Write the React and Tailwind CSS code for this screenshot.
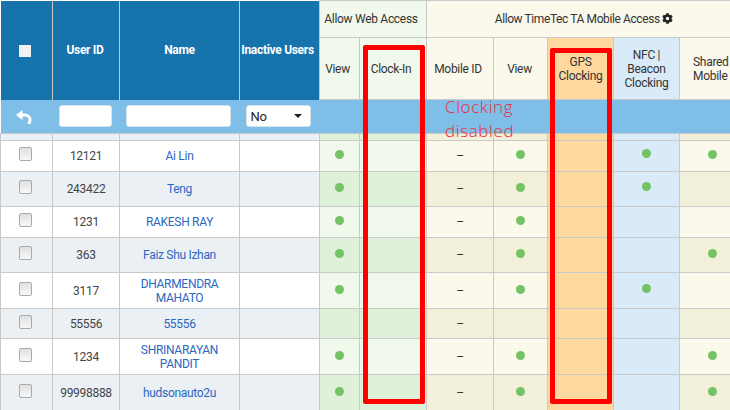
import { FaCog } from "react-icons/fa";

const users = [
  { id: "12121", name: "Ai Lin", h: "h-[31px]", view: 1, mobileView: 1, nfc: 1, shared: 1 },
  { id: "243422", name: "Teng", h: "h-[35px]", view: 1, mobileView: 1, nfc: 1, shared: 0 },
  { id: "1231", name: "RAKESH RAY", h: "h-[31px]", view: 1, mobileView: 1, nfc: 0, shared: 0 },
  { id: "363", name: "Faiz Shu Izhan", h: "h-[35px]", view: 1, mobileView: 1, nfc: 0, shared: 1 },
  { id: "3117", name: "DHARMENDRA MAHATO", h: "h-[36px]", view: 1, mobileView: 1, nfc: 1, shared: 0 },
  { id: "55556", name: "55556", h: "h-[30px]", view: 0, mobileView: 0, nfc: 0, shared: 0 },
  { id: "1234", name: "SHRINARAYAN PANDIT", h: "h-[36px]", view: 1, mobileView: 1, nfc: 0, shared: 1 },
  { id: "99998888", name: "hudsonauto2u", h: "h-[36px]", view: 1, mobileView: 1, nfc: 0, shared: 1 },
];

const Dot = ({ up }) => (
  <span className={`inline-block w-[9px] h-[9px] rounded-full bg-[#74c365] align-middle ${up ? "-translate-y-[3px]" : "-translate-y-[2px]"}`} />
);

const cell = "border border-[#c9c9c9] text-center p-0";
const head = "border border-[#c9c9c9] text-center p-0 text-[12px] leading-[14px] text-[#333] font-normal";
const blueHead = "border-r border-[#c9c9c9] text-center p-0 bg-[#1673ac] text-white font-bold text-[12px]";

function Row({ user, alt }) {
  const green = alt ? "bg-[#dff1d8]" : "bg-[#f1f8ec]";
  const cream = alt ? "bg-[#f3f0da]" : "bg-[#fbf8ec]";
  return (
    <tr className={`${user.h} ${alt ? "bg-[#ebf0f5]" : "bg-white"} text-[12px] leading-[14px]`}>
      <td className={cell}>
        <span className="inline-block w-[13px] h-[14px] rounded-[2px] border border-[#aaa] bg-gradient-to-b from-[#e0e0e0] to-[#f8f8f8] align-middle -translate-x-px -translate-y-[2px]" />
      </td>
      <td className={`${cell} text-[#444]`}>{user.id}</td>
      <td className={`${cell} text-[#2a68c0] px-4`}>{user.name}</td>
      <td className={cell} />
      <td className={`${cell} ${green}`}>{user.view ? <Dot /> : null}</td>
      <td className={`${cell} ${green}`} />
      <td className={`${cell} ${cream} text-[#333]`}>–</td>
      <td className={`${cell} ${cream}`}>{user.mobileView ? <Dot /> : null}</td>
      <td className={`${cell} bg-[#fed89f]`} />
      <td className={`${cell} bg-[#d9eaf8]`}>{user.nfc ? <Dot up /> : null}</td>
      <td className={`${cell} ${cream}`}>{user.shared ? <Dot /> : null}</td>
    </tr>
  );
}

export default function App() {
  return (
    <div className="relative w-[730px] h-[410px] overflow-hidden bg-white font-['Roboto',sans-serif] tracking-[-0.3px]">
      <table className="table-fixed border-collapse w-[745px]">
        <colgroup>
          <col className="w-[52px]" />
          <col className="w-[67px]" />
          <col className="w-[120px]" />
          <col className="w-[80px]" />
          <col className="w-[40px]" />
          <col className="w-[67px]" />
          <col className="w-[67px]" />
          <col className="w-[54px]" />
          <col className="w-[66px]" />
          <col className="w-[66px]" />
          <col className="w-[66px]" />
        </colgroup>
        <thead>
          <tr className="h-[37px]">
            <th rowSpan={2} className={blueHead}>
              <span className="inline-block w-[12px] h-[12px] bg-[#f1f1f1] align-middle -translate-x-px" />
            </th>
            <th rowSpan={2} className={`${blueHead} pr-[2px]`}>User ID</th>
            <th rowSpan={2} className={blueHead}>Name</th>
            <th rowSpan={2} className={`${blueHead} pr-[4px]`}>Inactive Users</th>
            <th colSpan={2} className={`${head} bg-[#f1f8ec] pr-[4px]`}>Allow Web Access</th>
            <th colSpan={5} className={`${head} bg-[#fbf8ec]`}>
              <span className="relative -left-[2px] tracking-[-0.4px]">
                Allow TimeTec TA Mobile Access <FaCog className="inline text-[#222] text-[11px] align-[-1px]" />
              </span>
            </th>
          </tr>
          <tr className="h-[62px]">
            <th className={`${head} bg-[#f1f8ec] pr-[4px]`}>View</th>
            <th className={`${head} bg-[#f1f8ec] pr-[4px]`}>Clock-In</th>
            <th className={`${head} bg-[#fbf8ec] pr-[4px]`}>Mobile ID</th>
            <th className={`${head} bg-[#fbf8ec] pr-[2px]`}>View</th>
            <th className={`${head} bg-[#fed89f]`}>GPS<br />Clocking</th>
            <th className={`${head} bg-[#d9eaf8]`}>NFC |<br />Beacon<br />Clocking</th>
            <th className={`${head} bg-[#fbf8ec] text-left pl-[13px]`}>Shared<br />Mobile</th>
          </tr>
        </thead>
        <tbody>
          <tr className="h-[34px] bg-[#7fbee6]">
            <td className="text-center p-0">
              <svg viewBox="0 0 16 14" className="inline-block w-[16px] h-[14px] -translate-x-[3px]" fill="none">
                <path d="M0 5 6.500 0v10z" fill="#fff" />
                <path d="M5 5h4a5 5 0 0 1 5 5c0 1.500-.5 2.800-1.500 4" stroke="#fff" strokeWidth="3" />
              </svg>
            </td>
            <td className="p-0">
              <input aria-label="User ID" className="block ml-[6px] w-[53px] h-[22px] bg-white rounded-[3px] border border-[#d5e5f0]" />
            </td>
            <td className="p-0">
              <input aria-label="Name" className="block ml-[6px] w-[105px] h-[22px] bg-white rounded-[3px] border border-[#d5e5f0]" />
            </td>
            <td className="p-0">
              <div className="ml-[6px] w-[65px] h-[22px] bg-white rounded-[3px] border border-[#d5e5f0] flex items-center justify-between pl-1 pr-2 text-[13px] text-[#222]">
                No
                <span className="w-0 h-0 border-x-[4px] border-x-transparent border-t-[4px] border-t-[#222]" />
              </div>
            </td>
            <td colSpan={7} />
          </tr>
          <tr className="h-[7px] bg-[#ebf0f5]">
            <td className={cell} />
            <td className={cell} />
            <td className={cell} />
            <td className={cell} />
            <td className={`${cell} bg-[#dff1d8]`} />
            <td className={`${cell} bg-[#dff1d8]`} />
            <td className={`${cell} bg-[#f3f0da]`} />
            <td className={`${cell} bg-[#f3f0da]`} />
            <td className={`${cell} bg-[#fed89f]`} />
            <td className={`${cell} bg-[#d9eaf8]`} />
            <td className={`${cell} bg-[#f3f0da]`} />
          </tr>
          {users.map((u, i) => <Row key={u.id} user={u} alt={i % 2 === 1} />)}
        </tbody>
      </table>

      {/* annotations pasted over the screenshot */}
      <div className="absolute left-[363px] top-[45px] w-[62px] h-[359px] border-[5px] border-[#ff0000] rounded-[2px]" />
      <div className="absolute left-[550px] top-[48px] w-[62px] h-[356px] border-[5px] border-[#ff0000] rounded-[2px]" />
      <div className="absolute left-[445px] top-[95px] text-[17px] leading-[24px] tracking-[0.6px] font-light text-[#ec2a42] font-['Open_Sans',sans-serif]">
        Clocking<br />disabled
      </div>
    </div>
  );
}
